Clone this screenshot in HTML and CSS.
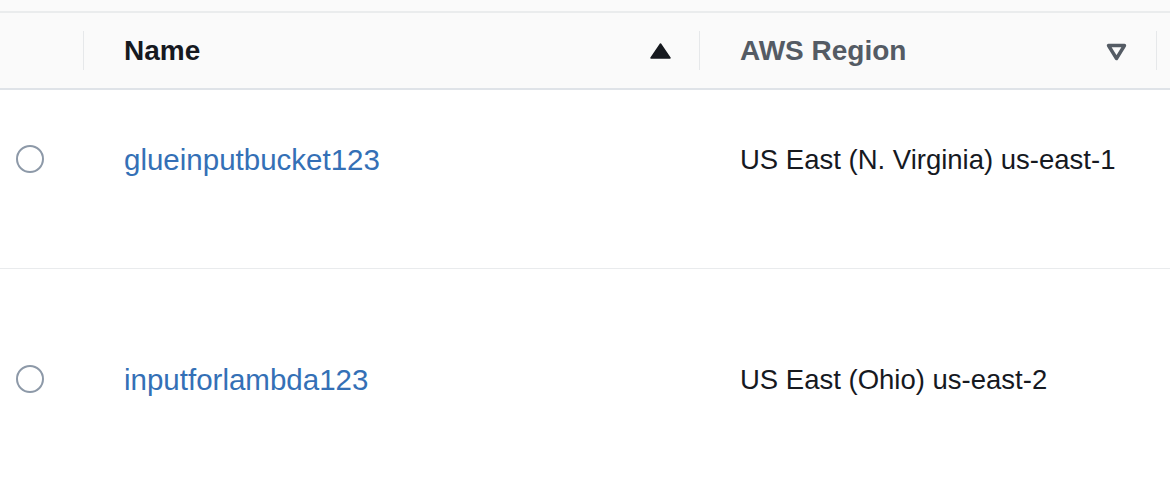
FILE: index.html
```html
<!DOCTYPE html>
<html lang="en">
<head>
<meta charset="utf-8">
<title>Buckets</title>
<link rel="stylesheet" href="styles.css">
</head>
<body>
<div class="table">
  <div class="topstrip"></div>
  <div class="thead">
    <div class="th th-select"></div>
    <div class="th">
      <span class="divider"></span>
      <span class="th-label th-label-active">Name</span>
      <svg class="sort-icon" width="21" height="16" viewBox="0 0 21 16" aria-hidden="true">
        <path d="M10.5 1 L20 15 L1 15 Z" fill="#16191f" stroke="#16191f" stroke-width="1.5" stroke-linejoin="round"/>
      </svg>
    </div>
    <div class="th">
      <span class="divider"></span>
      <span class="th-label">AWS Region</span>
      <svg class="sort-icon sort-icon-region" width="21" height="18" viewBox="0 0 21 18" aria-hidden="true">
        <path d="M2.5 2.5 L18.5 2.5 L10.5 15.5 Z" fill="none" stroke="#545b64" stroke-width="3.4" stroke-linejoin="round"/>
      </svg>
    </div>
    <div class="th">
      <span class="divider"></span>
    </div>
  </div>

  <div class="tr tr-first">
    <div class="td td-select"><span class="radio"></span></div>
    <div class="td td-name"><a class="link" href="#">glueinputbucket123</a></div>
    <div class="td td-region">US East (N. Virginia) us-east-1</div>
    <div class="td"></div>
  </div>

  <div class="tr tr-second">
    <div class="td td-select"><span class="radio"></span></div>
    <div class="td td-name"><a class="link" href="#">inputforlambda123</a></div>
    <div class="td td-region">US East (Ohio) us-east-2</div>
    <div class="td"></div>
  </div>
</div>
</body>
</html>
```
FILE: styles.css
```css
* { box-sizing: border-box; }

html, body {
  margin: 0;
  padding: 0;
  background: #ffffff;
}

body {
  font-family: "Liberation Sans", Arial, sans-serif;
  color: #16191f;
  width: 1170px;
  height: 487px;
  overflow: hidden;
}

.topstrip {
  height: 13px;
  background: #fafafa;
  border-bottom: 2px solid #eaeced;
}

.thead {
  display: grid;
  grid-template-columns: 83px 616px 457px 1fr;
  height: 77px;
  background: #fafafa;
  border-bottom: 2px solid #dfe3e8;
}

.th {
  display: flex;
  align-items: center;
}

.divider {
  display: block;
  width: 1px;
  height: 39px;
  background: #e6e8ea;
  flex: none;
}

.th-label {
  margin-left: 40px;
  font-size: 28px;
  line-height: 28px;
  font-weight: 700;
  color: #545b64;
}

.th-label-active {
  color: #16191f;
}

.sort-icon {
  margin-left: auto;
  margin-right: 28px;
  flex: none;
}

.sort-icon-region {
  margin-right: 29px;
  margin-top: 2px;
}

.tr {
  display: grid;
  grid-template-columns: 83px 616px 457px 1fr;
  align-items: center;
}

.tr-first {
  height: 179px;
  padding-top: 56px;
  padding-bottom: 95px;
  border-bottom: 1px solid #e9ebed;
}

.tr-second {
  padding-top: 97px;
}

.td {
  display: flex;
  align-items: center;
  height: 28px;
}

.td-select {
  padding-left: 16px;
}

.radio {
  display: block;
  width: 28px;
  height: 28px;
  border: 2px solid #8d99a8;
  border-radius: 50%;
  margin-top: -3px;
}

.td-name {
  padding-left: 41px;
}

.td-region {
  padding-left: 41px;
  font-size: 27.5px;
  line-height: 28px;
  color: #16191f;
}

.link {
  font-size: 29.5px;
  line-height: 28px;
  color: #3470b6;
  text-decoration: none;
}
```
